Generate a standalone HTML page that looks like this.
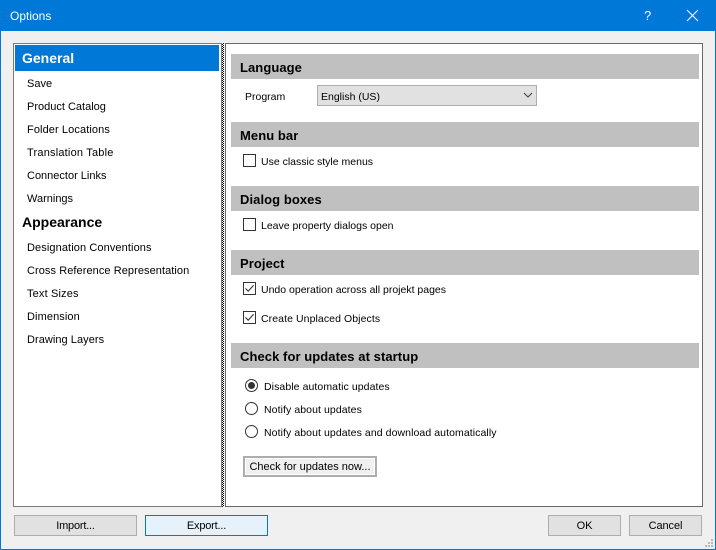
<!DOCTYPE html>
<html><head><meta charset="utf-8"><title>Options</title>
<style>
html,body{margin:0;padding:0;width:716px;height:550px;overflow:hidden;background:#f0f0f0}
body{position:relative;font-family:"Liberation Sans",sans-serif;font-size:11px;color:#000}
.a{position:absolute;white-space:nowrap;line-height:14px}
.p{font-size:10.5px}
.b{position:absolute;box-sizing:border-box}
.h{position:absolute;left:231px;width:468px;height:25px;background:#c0c0c0;font-weight:bold;font-size:13px;letter-spacing:.07px;line-height:28px;padding-left:9px;box-sizing:border-box}
.btn{position:absolute;box-sizing:border-box;height:21px;background:#e1e1e1;border:1px solid #adadad;text-align:center;line-height:21px;font-size:11px;white-space:nowrap;letter-spacing:-.1px}
.cb{position:absolute;left:243px;width:13px;height:13px;box-sizing:border-box;border:1px solid #333;background:#fff}
.cb svg{position:absolute;left:0;top:0}
.r{position:absolute;left:245px;width:13px;height:13px;box-sizing:border-box;border:1px solid #333;border-radius:50%;background:#fff}
.d{position:absolute;left:2px;top:2px;width:7px;height:7px;border-radius:50%;background:#333}
</style></head><body>
<div class="b" style="left:0;top:0;width:716px;height:550px;border:1px solid #0078d7"></div>
<div class="b" style="left:0;top:0;width:716px;height:31px;background:#0078d7"></div>
<div class="a" style="left:10px;top:9px;color:#fff;font-size:12px">Options</div>
<div class="a" style="left:644px;top:9px;color:#fff;font-size:13px">?</div>
<svg class="b" style="left:686px;top:9px" width="13" height="13" viewBox="0 0 13 13"><path d="M1 1L12 12M12 1L1 12" stroke="#fff" stroke-width="1.1" fill="none"/></svg>

<div class="b" style="left:13px;top:43px;width:209px;height:464px;background:#fff;border:1px solid #7a7a7a"></div>
<div class="b" style="left:15px;top:45px;width:204px;height:26px;background:#0078d7"></div>
<div class="a" style="left:22px;top:51px;color:#fff;font-weight:bold;font-size:14px">General</div>
<div class="a" style="left:27px;top:77px">Save</div>
<div class="a" style="left:27px;top:100px">Product Catalog</div>
<div class="a" style="left:27px;top:123px;letter-spacing:.1px">Folder Locations</div>
<div class="a" style="left:27px;top:146px;letter-spacing:.2px">Translation Table</div>
<div class="a" style="left:27px;top:169px">Connector Links</div>
<div class="a" style="left:27px;top:192px">Warnings</div>
<div class="a" style="left:22px;top:215px;font-weight:bold;font-size:14px">Appearance</div>
<div class="a" style="left:27px;top:241px;letter-spacing:.1px">Designation Conventions</div>
<div class="a" style="left:27px;top:264px;letter-spacing:.07px">Cross Reference Representation</div>
<div class="a" style="left:27px;top:287px;letter-spacing:.15px">Text Sizes</div>
<div class="a" style="left:27px;top:310px;letter-spacing:.1px">Dimension</div>
<div class="a" style="left:27px;top:333px;letter-spacing:.05px">Drawing Layers</div>

<div class="b" style="left:222px;top:43px;width:2px;height:464px;background:repeating-conic-gradient(#000 0 25%,#fff 0 50%) 0 0/2px 2px"></div>

<div class="b" style="left:225px;top:43px;width:478px;height:464px;background:#fff;border:1px solid #696969"></div>

<div class="h" style="top:54px">Language</div>
<div class="a p" style="left:245px;top:90px">Program</div>
<div class="b" style="left:317px;top:85px;width:220px;height:21px;background:#e1e1e1;border:1px solid #adadad"></div>
<div class="a p" style="left:321px;top:90px">English (US)</div>
<svg class="b" style="left:523px;top:92px" width="10" height="6" viewBox="0 0 10 6"><path d="M1 1L5 5L9 1" stroke="#444" stroke-width="1.1" fill="none"/></svg>

<div class="h" style="top:122px">Menu bar</div>
<div class="cb" style="top:154px"></div>
<div class="a p" style="left:261px;top:155px">Use classic style menus</div>

<div class="h" style="top:186px">Dialog boxes</div>
<div class="cb" style="top:218px"></div>
<div class="a p" style="left:261px;top:219px">Leave property dialogs open</div>

<div class="h" style="top:250px">Project</div>
<div class="cb" style="top:282px"><svg width="11" height="11" viewBox="0 0 11 11"><path d="M1.5 5.5L4.2 8.2L9.6 2.2" stroke="#333" stroke-width="1.1" fill="none"/></svg></div>
<div class="a p" style="left:261px;top:283px">Undo operation across all projekt pages</div>
<div class="cb" style="top:311px"><svg width="11" height="11" viewBox="0 0 11 11"><path d="M1.5 5.5L4.2 8.2L9.6 2.2" stroke="#333" stroke-width="1.1" fill="none"/></svg></div>
<div class="a p" style="left:261px;top:312px;letter-spacing:.08px">Create Unplaced Objects</div>

<div class="h" style="top:343px">Check for updates at startup</div>
<div class="r" style="top:379px"><div class="d"></div></div>
<div class="a p" style="left:264px;top:380px;letter-spacing:.08px">Disable automatic updates</div>
<div class="r" style="top:402px"></div>
<div class="a p" style="left:264px;top:403px;letter-spacing:.08px">Notify about updates</div>
<div class="r" style="top:425px"></div>
<div class="a p" style="left:264px;top:426px;letter-spacing:.08px">Notify about updates and download automatically</div>

<div class="btn" style="left:243px;top:456px;width:134px;background:#f0f0f0;border:2px solid #adadad;line-height:19px;letter-spacing:0;box-shadow:inset 0 0 0 1px #fff">Check for updates now...</div>

<div class="btn" style="left:14px;top:515px;width:123px;letter-spacing:-.2px">Import...</div>
<div class="btn" style="left:145px;top:515px;width:123px;background:#e5f1fb;border-color:#0078d7;letter-spacing:-.2px">Export...</div>
<div class="btn" style="left:548px;top:515px;width:73px">OK</div>
<div class="btn" style="left:629px;top:515px;width:73px">Cancel</div>

<svg class="b" style="left:704px;top:538px" width="10" height="10" viewBox="0 0 10 10"><path d="M7 1h2v2h-2zM4 4h2v2h-2zM7 4h2v2h-2zM1 7h2v2h-2zM4 7h2v2h-2zM7 7h2v2h-2z" fill="#b8b8b8"/></svg>
</body></html>
